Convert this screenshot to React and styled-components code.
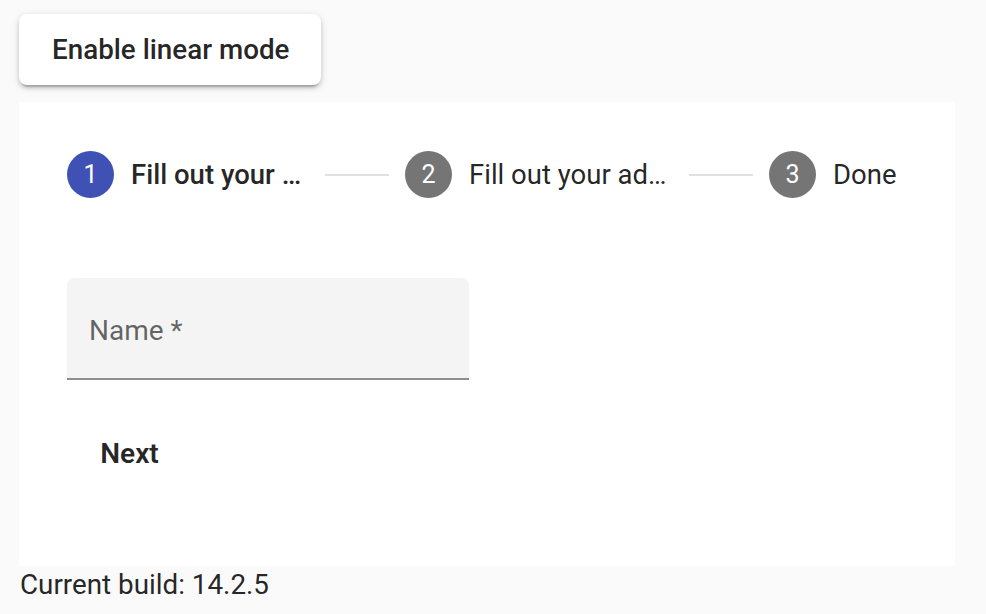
import React from 'react'
import styled, { createGlobalStyle } from 'styled-components'

const GlobalStyle = createGlobalStyle`
  html, body {
    margin: 0;
    padding: 0;
    background: #fafafa;
  }
  body {
    font-family: Roboto, "Helvetica Neue", "Liberation Sans", sans-serif;
    color: rgba(0, 0, 0, 0.87);
  }
`

const steps = [
  { n: 1, label: 'Fill out your name', width: 172, active: true },
  { n: 2, label: 'Fill out your address', width: 198 },
  { n: 3, label: 'Done', width: 64 },
]

const App = () => {
  return (
    <Page>
      <GlobalStyle />
      <RaisedButton>Enable linear mode</RaisedButton>
      <Card>
        <StepperHeader>
          {steps.map((s, i) => (
            <React.Fragment key={s.n}>
              {i > 0 && <StepLine />}
              <StepHeader>
                <StepIcon active={s.active}>{s.n}</StepIcon>
                <StepLabel active={s.active} width={s.width}>{s.label}</StepLabel>
              </StepHeader>
            </React.Fragment>
          ))}
        </StepperHeader>
        <StepContent>
          <FormField>
            <FieldLabel>Name *</FieldLabel>
          </FormField>
          <TextButton>Next</TextButton>
        </StepContent>
      </Card>
      <Build>Current build: 14.2.5</Build>
    </Page>
  )
}

const Page = styled.div`
  padding: 14px 0 0 19px;
`

const RaisedButton = styled.button`
  display: block;
  height: 71px;
  padding: 0 32px 0 33px;
  border: none;
  border-radius: 8px;
  background: #fff;
  color: rgba(0, 0, 0, 0.87);
  font-family: Roboto, "Liberation Sans", sans-serif;
  font-size: 27.8px;
  font-weight: 500;
  box-shadow: 0 5px 2px -3px rgba(0, 0, 0, 0.2), 0 3px 4px 0 rgba(0, 0, 0, 0.14), 0 2px 9px 0 rgba(0, 0, 0, 0.12);
`

const Card = styled.div`
  box-sizing: border-box;
  width: 936px;
  height: 464px;
  margin-top: 17px;
  background: #fff;
  padding: 49px 48px 0 48px;
`

const StepperHeader = styled.div`
  display: flex;
  align-items: center;
  height: 47px;
`

const StepHeader = styled.div`
  display: flex;
  align-items: center;
  gap: 17px;
`

const StepIcon = styled.div`
  width: 47px;
  height: 47px;
  flex: none;
  border-radius: 50%;
  background: ${p => (p.active ? '#3f51b5' : '#757575')};
  color: #fff;
  display: flex;
  align-items: center;
  justify-content: center;
  font-size: 25px;
`

const StepLabel = styled.div`
  width: ${p => p.width}px;
  font-size: 27.5px;
  font-weight: ${p => (p.active ? 500 : 400)};
  color: rgba(0, 0, 0, 0.87);
  white-space: nowrap;
  overflow: hidden;
  text-overflow: ellipsis;
`

const StepLine = styled.div`
  width: 64px;
  height: 2px;
  margin: 0 16px 0 22px;
  background: #e0e0e0;
`

const StepContent = styled.div`
  padding-top: 80px;
`

const FormField = styled.div`
  box-sizing: border-box;
  width: 402px;
  height: 102px;
  background: #f4f4f4;
  border-radius: 8px 8px 0 0;
  border-bottom: 2px solid #8e8e8e;
  display: flex;
  align-items: center;
  padding: 5px 22px 0;
`

const FieldLabel = styled.span`
  font-size: 28px;
  color: rgba(0, 0, 0, 0.6);
`

const TextButton = styled.button`
  display: block;
  margin-top: 38px;
  min-width: 125px;
  height: 71px;
  padding: 0 31px;
  border: none;
  background: transparent;
  font-family: Roboto, "Liberation Sans", sans-serif;
  font-size: 28px;
  font-weight: 600;
  color: rgba(0, 0, 0, 0.87);
`

const Build = styled.div`
  padding: 2px 0 0 1px;
  font-size: 27.8px;
  color: rgba(0, 0, 0, 0.87);
`

export default App
